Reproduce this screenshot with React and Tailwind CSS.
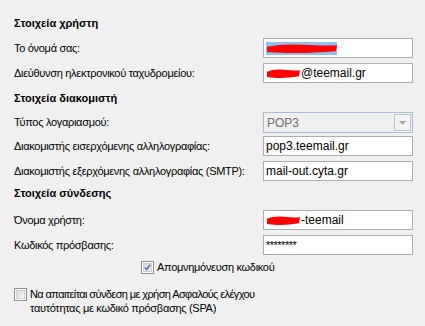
import React from 'react'

const font = "font-['Liberation_Sans',Arial,sans-serif]"

function Scribble({ w, h }) {
  return (
    <svg width={w} height={h} viewBox={`0 0 ${w} ${h}`} className="shrink-0">
      <path
        d={`M1 ${h * 0.35} Q ${w * 0.2} ${h * 0.05} ${w * 0.5} ${h * 0.15} T ${w - 1} ${h * 0.2} L ${w - 2} ${h * 0.75} Q ${w * 0.6} ${h * 0.95} ${w * 0.3} ${h * 0.9} T 1 ${h * 0.8} Z`}
        fill="#ff0000"
      />
    </svg>
  )
}

function TextBox({ children }) {
  return (
    <div className="w-[150px] h-[20px] bg-white border border-[#abadb3] flex items-center pl-[2px] overflow-hidden whitespace-nowrap text-[12px] tracking-normal">
      {children}
    </div>
  )
}

function Row({ label, children, className = '' }) {
  return (
    <div className={`flex items-center justify-between ${className}`}>
      <span>{label}</span>
      {children}
    </div>
  )
}

function Heading({ children, className = '' }) {
  return (
    <div className={`h-[16px] leading-[16px] font-bold tracking-normal ${className}`}>
      {children}
    </div>
  )
}

function Checkbox({ checked }) {
  return (
    <div className="w-[13px] h-[13px] shrink-0 border border-[#8f8f8f] bg-white p-px">
      <div className="w-full h-full border border-[#cfcfcf] bg-gradient-to-br from-[#d8d8d8] to-[#f7f7f7] flex items-center justify-center">
        {checked && (
          <svg width="9" height="9" viewBox="0 0 9 9">
            <path d="M1 4.5 L3.5 7 L8 1" fill="none" stroke="#4a5f97" strokeWidth="1.8" />
          </svg>
        )}
      </div>
    </div>
  )
}

export default function App() {
  return (
    <div className={`w-[425px] h-[326px] bg-[#f0f0f0] text-[11px] tracking-[-0.3px] text-black pl-[14px] pr-[12px] pt-[15px] ${font}`}>
      <Heading className="mb-[7px]">Στοιχεία χρήστη</Heading>
      <Row label="Το όνομά σας:" className="mb-[5px]">
        <TextBox>
          <div className="relative w-[71px] h-[13px] bg-[#8fc0ee] mt-px">
            <div className="absolute left-0 top-[1px]">
              <Scribble w={72} h={11} />
            </div>
          </div>
        </TextBox>
      </Row>
      <Row label="Διεύθυνση ηλεκτρονικού ταχυδρομείου:">
        <TextBox>
          <Scribble w={35} h={11} />
          <span>@teemail.gr</span>
        </TextBox>
      </Row>

      <Heading className="mt-[7px] mb-[6px]">Στοιχεία διακομιστή</Heading>
      <Row label="Τύπος λογαριασμού:" className="mb-[3px]">
        <div className="w-[150px] h-[21px] border border-[#a9bdd4] bg-[#f0f0f0] flex items-center justify-between pl-[3px] pr-px text-[12px] tracking-normal">
          <span className="text-[#6d6d6d]">POP3</span>
          <div className="w-[17px] h-[17px] border border-[#c2c2c2] bg-[#f4f4f4] flex items-center justify-center">
            <svg width="7" height="4" viewBox="0 0 7 4">
              <path d="M0 0 L7 0 L3.5 4 Z" fill="#a6a6a6" />
            </svg>
          </div>
        </div>
      </Row>
      <Row label="Διακομιστής εισερχόμενης αλληλογραφίας:" className="mb-[5px]">
        <TextBox>pop3.teemail.gr</TextBox>
      </Row>
      <Row label="Διακομιστής εξερχόμενης αλληλογραφίας (SMTP):">
        <TextBox>mail-out.cyta.gr</TextBox>
      </Row>

      <Heading className="mt-[4px] mb-[9px]">Στοιχεία σύνδεσης</Heading>
      <Row label="Όνομα χρήστη:" className="mb-[5px]">
        <TextBox>
          <Scribble w={35} h={11} />
          <span>-teemail</span>
        </TextBox>
      </Row>
      <Row label="Κωδικός πρόσβασης:">
        <TextBox>
          <span className="text-[11px] tracking-[-0.5px]">********</span>
        </TextBox>
      </Row>

      <div className="flex items-center gap-[3px] ml-[127px] mt-[6px] h-[13px]">
        <Checkbox checked />
        <span>Απομνημόνευση κωδικού</span>
      </div>

      <div className="flex items-start gap-[3px] mt-[14px]">
        <Checkbox />
        <div className="leading-[14px] -mt-[1px]">
          <div className="tracking-[-0.6px]">Να απαιτείται σύνδεση με χρήση Ασφαλούς ελέγχου</div>
          <div>ταυτότητας με κωδικό πρόσβασης (SPA)</div>
        </div>
      </div>
    </div>
  )
}
